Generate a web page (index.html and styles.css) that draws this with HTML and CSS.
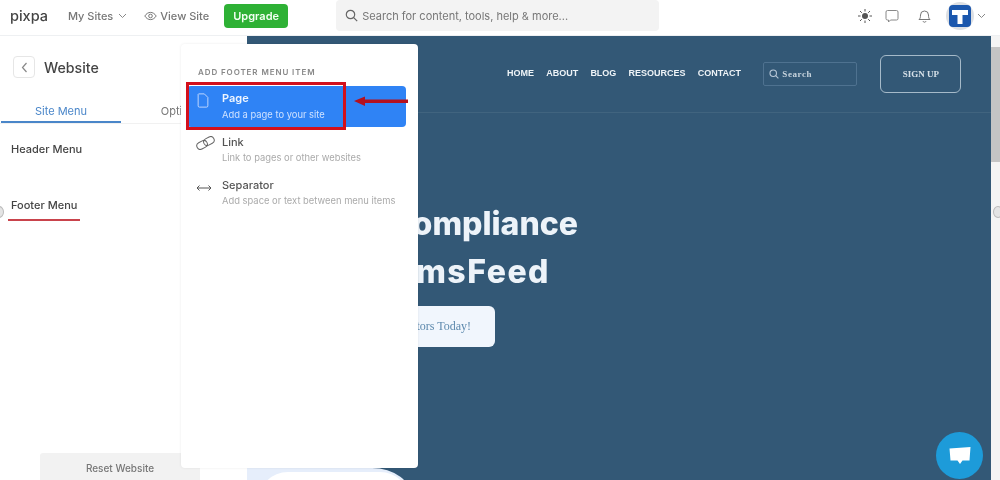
FILE: index.html
```html
<!DOCTYPE html>
<html lang="en">
 <head>
  <meta charset="utf-8">
  <title>Pixpa - Website</title>
  <link rel="stylesheet" href="styles.css">
 </head>
 <body>
  <div class="topbar">
    <div class="logo">pixpa</div>
    <div class="topLink">My Sites
      <svg class="chev" width="9" height="6" viewBox="0 0 9 6"><path d="M1 1l3.5 3.5L8 1" fill="none" stroke="#888" stroke-width="1"/></svg>
    </div>
    <div class="topLink viewSite">
      <svg width="13" height="10" viewBox="0 0 13 10"><path d="M.8 5C3.8.2 9.2.2 12.2 5 9.2 9.800 3.800 9.800.8 5z" fill="none" stroke="#777" stroke-width="1"/><circle cx="6.500" cy="5" r="1.800" fill="none" stroke="#777" stroke-width="1"/></svg>
      View Site
    </div>
    <div class="upgrade">Upgrade</div>
    <div class="searchBox">
      <svg width="13" height="13" viewBox="0 0 13 13"><circle cx="5.500" cy="5.500" r="4.200" fill="none" stroke="#666" stroke-width="1.200"/><path d="M8.700 8.700l3.500 3.500" stroke="#666" stroke-width="1.200"/></svg>
      Search for content, tools, help &amp; more...
    </div>
    <div class="topIcons">
      <svg class="sunIcon" width="14" height="14" viewBox="0 0 14 14"><circle cx="7" cy="7" r="3" fill="#555"/><path d="M7 0v2.500M7 11.500V14M0 7h2.500M11.500 7H14M2 2l1.800 1.800M10.200 10.200L12 12M2 12l1.800-1.800M10.200 3.800L12 2" stroke="#555" stroke-width="1"/></svg>
      <svg class="msgIcon" width="14" height="14" viewBox="0 0 14 14"><path d="M2.500 1.500h9a1.500 1.500 0 0 1 1.500 1.500v6.500a1.500 1.500 0 0 1-1.500 1.500H5.500l-2 2v-2h-1A1.500 1.500 0 0 1 1 9.500V3a1.500 1.500 0 0 1 1.500-1.500z" fill="none" stroke="#888" stroke-width="1"/></svg>
      <svg class="bellIcon" width="13" height="14" viewBox="0 0 13 14"><path d="M1 10.500c1.200-1 1.500-2 1.500-4.500a4 4 0 0 1 8 0c0 2.500.3 3.500 1.500 4.500zM5 12.200a1.600 1.600 0 0 0 3 0" fill="none" stroke="#777" stroke-width="1"/></svg>
      <div class="avatarRing">
        <div class="avatar">
          <svg width="22" height="22" viewBox="0 0 22 22"><path d="M3 5h16v5h-5.500v9h-5v-9H3z" fill="#fff"/></svg>
        </div>
      </div>
      <svg width="9" height="6" viewBox="0 0 9 6"><path d="M1 1l3.500 3.500L8 1" fill="none" stroke="#888" stroke-width="1"/></svg>
    </div>
  </div>

  <div class="main">
    <div class="sidebar">
      <div class="sideHead">
        <div class="backBtn">
          <svg width="7" height="11" viewBox="0 0 7 11"><path d="M5.500 1L1.500 5.500l4 4.500" fill="none" stroke="#888" stroke-width="1.200"/></svg>
        </div>
        <div class="sideTitle">Website</div>
      </div>
      <div class="tabs">
        <div class="tab tabActive">Site Menu</div>
        <div class="tab">Options</div>
      </div>
      <div class="menuName">Header Menu</div>
      <div class="menuName footerName">Footer Menu</div>
      <div class="resetBtn">Reset Website</div>
    </div>

    <div class="preview">
      <div class="siteNav">
        <div class="siteLink">HOME</div>
        <div class="siteLink">ABOUT</div>
        <div class="siteLink">BLOG</div>
        <div class="siteLink">RESOURCES</div>
        <div class="siteLink">CONTACT</div>
        <div class="siteSearch">
          <svg width="10" height="10" viewBox="0 0 13 13"><circle cx="5.500" cy="5.500" r="4.200" fill="none" stroke="#b8c8d8" stroke-width="1.400"/><path d="M8.700 8.700l3.500 3.500" stroke="#b8c8d8" stroke-width="1.400"/></svg>
          Search
        </div>
        <div class="signUp">SIGN UP</div>
      </div>
      <div class="hero">
        <div class="heroLine">Get Compliance</div>
        <div class="heroLine heroLine2">with TermsFeed</div>
        <div class="heroBtn">Find Our Generators Today!</div>
      </div>
      <div class="cardPeek"><div class="cardPeekInner"></div></div>
      <div class="chatBubble">
        <svg width="24" height="20" viewBox="0 0 24 20"><path d="M1.500 2.500L22.500 1l-1 13.500h-7L12 18l-2.500-3.500H2.500z" fill="#fff"/></svg>
      </div>
    </div>

    <div class="scrollBar">
      <div class="scrollUp"></div>
      <div class="scrollThumb"></div>
    </div>

    <div class="handle handleLeft"></div>
    <div class="handle handleRight"></div>

    <div class="popover">
      <div class="popTitle">ADD FOOTER MENU ITEM</div>
      <div class="popItem popItemActive">
        <svg class="iconPage" width="14" height="15" viewBox="0 0 14 17"><path d="M2 1h6.500L12.500 5v9.500a1.500 1.500 0 0 1-1.500 1.500H3a1.500 1.500 0 0 1-1.500-1.500V1.500z" fill="none" stroke="#cfe0ff" stroke-width="1"/></svg>
        <div>
          <div class="popName">Page</div>
          <div class="popDesc">Add a page to your site</div>
        </div>
      </div>
      <div class="popItem">
        <svg class="iconLink" width="19" height="14" viewBox="0 0 19 14"><rect x=".6" y="5.500" width="11" height="7" rx="3.500" transform="rotate(-28 6 9)" fill="none" stroke="#666" stroke-width="1"/><rect x="7.400" y="1.500" width="11" height="7" rx="3.500" transform="rotate(-28 13 5)" fill="none" stroke="#666" stroke-width="1"/></svg>
        <div>
          <div class="popName">Link</div>
          <div class="popDesc">Link to pages or other websites</div>
        </div>
      </div>
      <div class="popItem">
        <svg class="iconSep" width="16" height="8" viewBox="0 0 16 8"><path d="M1 4h14M3.500 1.500L1 4l2.500 2.500M12.500 1.500L15 4l-2.500 2.500" fill="none" stroke="#555" stroke-width="1"/></svg>
        <div>
          <div class="popName">Separator</div>
          <div class="popDesc">Add space or text between menu items</div>
        </div>
      </div>
    </div>

    <div class="redBox"></div>
    <div class="redArrow">
      <svg width="54" height="10" viewBox="0 0 54 10"><path d="M0 5l11-4.500v3h43v3.400H11v3z" fill="#b4111f"/></svg>
    </div>
    <div class="redLine"></div>
  </div>
 </body>
</html>
```

FILE: styles.css
```css
html, body { height: 100%; }
body {
 margin: 0;
 overflow: hidden;
 display: flex;
 flex-direction: column;
 background: #fff;
 font-family: Inter, "Liberation Sans", sans-serif;
 color: #444;
 filter: blur(.35px);
}

/* top bar */
.topbar {
 height: 36px;
 flex: none;
 box-sizing: border-box;
 display: flex;
 align-items: center;
 padding: 0 0 4px 10px;
 background: #fff;
 border-bottom: 1px solid #eef0f2;
}
.logo { font-size: 14.5px; font-weight: 500; color: #444; width: 58px; }
.topLink { font-size: 11px; color: #777; display: flex; align-items: center; gap: 5px; font-weight: 500; }
.viewSite { margin-left: 17px; gap: 3px; }
.upgrade {
 margin-left: 15px;
 width: 64px;
 height: 24px;
 display: flex;
 align-items: center;
 justify-content: center;
 background: #2eb135;
 border-radius: 4px;
 color: #f2fff2;
 font-size: 11px;
 font-weight: 600;
}
.searchBox {
 margin-left: 48px;
 width: 323px;
 height: 31px;
 box-sizing: border-box;
 padding-left: 9px;
 display: flex;
 align-items: center;
 gap: 4px;
 background: #f3f3f3;
 border-radius: 4px;
 font-size: 11px;
 color: #777;
}
.topIcons { margin-left: auto; margin-right: 14px; display: flex; align-items: center; }
.msgIcon { margin-left: 13px; }
.bellIcon { margin-left: 19px; }
.avatarRing {
 width: 28px;
 height: 28px;
 margin-left: 15px;
 margin-right: 3px;
 border-radius: 50%;
 background: #dcdfe3;
 display: flex;
 align-items: center;
 justify-content: center;
}
.avatar {
 width: 22px;
 height: 22px;
 background: #1b57ad;
 border-radius: 4px;
}

/* main area */
.main { flex: 1; display: flex; position: relative; overflow: hidden; }

.sidebar { width: 247px; flex: none; box-sizing: border-box; position: relative; background: #fff; }
.sideHead { display: flex; align-items: center; gap: 9px; padding: 20px 0 0 13px; }
.backBtn {
 width: 22px;
 height: 22px;
 box-sizing: border-box;
 border: 1px solid #e6e6e6;
 border-radius: 4px;
 display: flex;
 align-items: center;
 justify-content: center;
}
.sideTitle { font-size: 14.2px; font-weight: 500; color: #444; }
.tabs { display: flex; margin-top: 20px; padding-left: 1px; border-bottom: 1px solid #f1f1f1; }
.tab { width: 120px; height: 25px; box-sizing: border-box; padding-top: 6px; text-align: center; font-size: 11px; color: #777; }
.tabActive { color: #4a86c9; border-bottom: 2px solid #4a86c9; }
.menuName { margin: 18px 0 0 11px; font-size: 11px; font-weight: 500; color: #444; line-height: 14px; }
.footerName { margin-top: 42px; }
.resetBtn {
 position: absolute;
 left: 40px;
 top: 417px;
 width: 160px;
 height: 40px;
 padding-top: 9px;
 box-sizing: border-box;
 background: #f2f2f2;
 border-radius: 3px;
 text-align: center;
 font-size: 10px;
 font-weight: 500;
 color: #777;
}

/* site preview */
.preview { flex: 1; position: relative; background: #335876; overflow: hidden; }
.siteNav {
 height: 77px;
 box-sizing: border-box;
 display: flex;
 align-items: center;
 padding-left: 260px;
 border-bottom: 1px solid #41647f;
}
.siteLink { font-family: "Liberation Sans", sans-serif; font-size: 9px; font-weight: 700; color: #eef3f7; margin-right: 12.2px; padding-bottom: 2px; }
.siteSearch {
 width: 94px;
 height: 24px;
 box-sizing: border-box;
 margin-left: 10px;
 padding-left: 5px;
 display: flex;
 align-items: center;
 gap: 3px;
 border: 1px solid #4f7290;
 border-radius: 2px;
 font-family: "Liberation Serif", serif;
 font-size: 9px;
 font-weight: 700;
 letter-spacing: .6px;
 color: #c8d4de;
}
.signUp {
 width: 81px;
 height: 38px;
 box-sizing: border-box;
 margin-left: 23px;
 display: flex;
 align-items: center;
 justify-content: center;
 border: 1px solid #a6bac9;
 border-radius: 6px;
 font-family: "Liberation Serif", serif;
 font-size: 9px;
 font-weight: 700;
 color: #d6e0e8;
}
.hero { width: 331px; padding-top: 87px; display: flex; flex-direction: column; align-items: flex-end; }
.heroLine { font-size: 32px; line-height: 48px; font-weight: 800; color: #edf3f9; white-space: nowrap; }
.heroLine2 { margin-right: 28px; letter-spacing: 1.5px; }
.heroBtn {
 margin-top: 10px;
 margin-right: 83px;
 width: 220px;
 height: 41px;
 box-sizing: border-box;
 padding-right: 24px;
 display: flex;
 align-items: center;
 justify-content: flex-end;
 background: #f1f6fd;
 border-radius: 6px;
 font-family: "Liberation Serif", serif;
 font-size: 12px;
 color: #5d89ad;
 white-space: nowrap;
 flex: none;
}
.cardPeek {
 position: absolute;
 left: 0;
 top: 432px;
 width: 165px;
 height: 60px;
 background: #e6eefb;
 border-top-right-radius: 40px 30px;
}
.cardPeekInner {
 margin: 4px 0 0 11px;
 width: 152px;
 height: 60px;
 background: #fff;
 border-radius: 30px;
}
.chatBubble {
 position: absolute;
 right: 8px;
 bottom: 1px;
 width: 47px;
 height: 47px;
 border-radius: 50%;
 background: #1d9bd9;
 display: flex;
 align-items: center;
 justify-content: center;
}

/* scroll bar */
.scrollBar { width: 9px; flex: none; background: #f4f4f4; }
.scrollUp { height: 11px; }
.scrollThumb { height: 115px; background: #c4c4c4; }

.handle {
 position: absolute;
 top: 170px;
 width: 10px;
 height: 12px;
 border-radius: 50%;
 background: #e4e4e4;
 border: 1px solid #bbb;
 box-sizing: border-box;
}
.handleLeft { left: -6px; }
.handleRight { right: -3px; }

/* add menu item popover */
.popover {
 position: absolute;
 left: 181px;
 top: 8px;
 width: 237px;
 height: 424px;
 box-sizing: border-box;
 padding: 23px 12px 0 6px;
 background: #fff;
 border-radius: 4px;
 box-shadow: 0 0 3px rgba(0, 0, 0, .08);
}
.popTitle { font-size: 8px; font-weight: 600; letter-spacing: .9px; color: #888; padding-left: 11px; margin-bottom: 9px; line-height: 10px; }
.popItem { display: flex; height: 43px; box-sizing: border-box; padding: 6px 0 0 9px; }
.popItemActive { height: 41px; margin-bottom: 2px; padding-top: 5px; background: #2f83f5; border-radius: 4px; }
.iconPage { flex: none; margin: 2px 12px 0 0; }
.iconLink { flex: none; margin: 1px 7px 0 0; }
.iconSep { flex: none; margin: 6px 10px 0 0; }
.popName { font-size: 11px; font-weight: 500; color: #555; line-height: 14px; }
.popDesc { font-size: 9.4px; color: #aaa; line-height: 13px; margin-top: 2px; white-space: nowrap; }
.popItemActive .popName { color: #eef5ff; font-weight: 600; }
.popItemActive .popDesc { color: #cfe2ff; margin-top: 3px; }

/* red annotations */
.redBox {
 position: absolute;
 left: 186px;
 top: 46px;
 width: 160px;
 height: 48px;
 box-sizing: border-box;
 border: 3px solid #d3101c;
}
.redArrow { position: absolute; left: 354px; top: 60px; line-height: 0; }
.redLine { position: absolute; left: 8px; top: 183px; width: 72px; height: 2px; background: #c9434c; }
```
